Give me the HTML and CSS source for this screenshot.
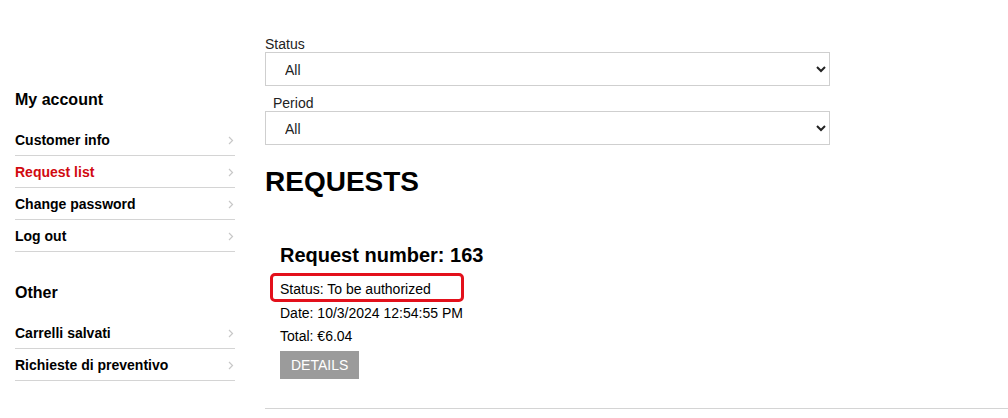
FILE: index.html
```html
<!DOCTYPE html>
<html>
<head>
<meta charset="utf-8">
<link rel="stylesheet" href="styles.css">
</head>
<body>
<div class="page">
  <aside class="sidebar">
    <h3 class="side-title first">My account</h3>
    <ul class="side-list">
      <li><a class="side-link">Customer info</a><span class="chev"><svg width="6" height="9" viewBox="0 0 6 9"><path d="M1 1l3.5 3.5L1 8" fill="none" stroke="#c8c8c8" stroke-width="1.2"/></svg></span></li>
      <li><a class="side-link active">Request list</a><span class="chev"><svg width="6" height="9" viewBox="0 0 6 9"><path d="M1 1l3.5 3.5L1 8" fill="none" stroke="#c8c8c8" stroke-width="1.2"/></svg></span></li>
      <li><a class="side-link">Change password</a><span class="chev"><svg width="6" height="9" viewBox="0 0 6 9"><path d="M1 1l3.5 3.5L1 8" fill="none" stroke="#c8c8c8" stroke-width="1.2"/></svg></span></li>
      <li><a class="side-link">Log out</a><span class="chev"><svg width="6" height="9" viewBox="0 0 6 9"><path d="M1 1l3.5 3.5L1 8" fill="none" stroke="#c8c8c8" stroke-width="1.2"/></svg></span></li>
    </ul>
    <h3 class="side-title">Other</h3>
    <ul class="side-list">
      <li><a class="side-link">Carrelli salvati</a><span class="chev"><svg width="6" height="9" viewBox="0 0 6 9"><path d="M1 1l3.5 3.5L1 8" fill="none" stroke="#c8c8c8" stroke-width="1.2"/></svg></span></li>
      <li><a class="side-link">Richieste di preventivo</a><span class="chev"><svg width="6" height="9" viewBox="0 0 6 9"><path d="M1 1l3.5 3.5L1 8" fill="none" stroke="#c8c8c8" stroke-width="1.2"/></svg></span></li>
    </ul>
  </aside>
  <main class="main">
    <div class="filters">
      <label class="f-label">Status</label>
      <select class="f-select"><option>All</option></select>
      <label class="f-label indent">Period</label>
      <select class="f-select"><option>All</option></select>
    </div>
    <h1 class="page-title">REQUESTS</h1>
    <div class="request">
      <h2 class="req-title">Request number: 163</h2>
      <div class="req-status">Status: To be authorized</div>
      <div class="req-line">Date: 10/3/2024 12:54:55 PM</div>
      <div class="req-line">Total: €6.04</div>
      <button class="btn-details">DETAILS</button>
    </div>
  </main>
</div>
</body>
</html>
```
FILE: styles.css
```css
* { box-sizing: border-box; }
html, body { margin: 0; padding: 0; background: #fff; }
body {
  font-family: "Liberation Sans", Arial, sans-serif;
  color: #000;
  font-size: 14px;
}
.page {
  display: flex;
  gap: 30px;
  padding-left: 15px;
}
.sidebar {
  width: 220px;
  flex: none;
  padding-top: 90px;
}
.side-title {
  margin: 31px 0 14px;
  font-size: 16px;
  line-height: 20px;
  font-weight: bold;
}
.side-title.first { margin-top: 0; }
.side-list { list-style: none; margin: 0; padding: 0; }
.side-list li {
  display: flex;
  align-items: center;
  justify-content: space-between;
  height: 32px;
  border-bottom: 1px solid #d4d4d4;
  padding-top: 1px;
}
.side-link {
  font-weight: bold;
  font-size: 14px;
  color: #000;
}
.side-link.active { color: #d10a10; }
.chev { display: flex; margin-right: 1px; }
.main {
  flex: 1;
  padding-top: 36px;
}
.filters {
  width: 565px;
  display: flex;
  flex-direction: column;
}
.f-label {
  font-size: 14px;
  line-height: 16px;
  color: #222;
}
.f-label.indent { padding-left: 8px; margin-top: 9px; }
.f-select {
  height: 34px;
  width: 565px;
  border: 1px solid #cfcfcf;
  border-radius: 0;
  background: #fff;
  font-family: "Liberation Sans", Arial, sans-serif;
  font-size: 14px;
  color: #222;
  padding: 2px 10px 0 15px;
  outline: none;
}
.page-title {
  margin: 22px 0 0;
  font-size: 28px;
  line-height: 30px;
  font-weight: bold;
}
.request {
  margin-top: 46px;
  padding: 0 0 29px 15px;
  border-bottom: 1px solid #d4d4d4;
}
.req-title {
  margin: 0 0 6px;
  font-size: 20px;
  line-height: 24px;
  font-weight: bold;
}
.req-status {
  display: inline-block;
  margin-left: -10px;
  border: 3px solid #e3101b;
  border-radius: 5px;
  padding: 3px 30px 0 7px;
  height: 29px;
  line-height: 20px;
}
.req-line {
  line-height: 23px;
}
.btn-details {
  margin-top: 3px;
  height: 28px;
  padding: 0 11px;
  border: none;
  background: #9b9b9b;
  color: #fff;
  font-family: "Liberation Sans", Arial, sans-serif;
  font-size: 14px;
  cursor: pointer;
}
```
